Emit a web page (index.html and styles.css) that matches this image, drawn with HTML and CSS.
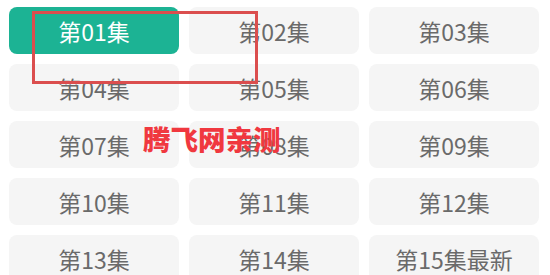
FILE: index.html
```html
<!DOCTYPE html>
<html lang="zh">
<head>
<meta charset="utf-8">
<link rel="stylesheet" href="styles.css">
</head>
<body>
<div class="page">
  <div class="grid">
    <div class="ep active">第01集</div>
    <div class="ep">第02集</div>
    <div class="ep">第03集</div>
    <div class="ep">第04集</div>
    <div class="ep">第05集</div>
    <div class="ep">第06集</div>
    <div class="ep">第07集</div>
    <div class="ep">第08集</div>
    <div class="ep">第09集</div>
    <div class="ep">第10集</div>
    <div class="ep">第11集</div>
    <div class="ep">第12集</div>
    <div class="ep">第13集</div>
    <div class="ep">第14集</div>
    <div class="ep">第15集最新</div>
  </div>
  <div class="mark-box"></div>
  <div class="watermark">腾飞网亲测</div>
</div>
</body>
</html>
```

FILE: styles.css
```css
html, body {
  margin: 0;
  padding: 0;
  background: #ffffff;
  overflow: hidden;
}
.page {
  position: relative;
  width: 550px;
  height: 275px;
  font-family: "Noto Sans CJK SC", "Noto Sans", sans-serif;
}
.grid {
  display: grid;
  grid-template-columns: repeat(3, 170px);
  grid-auto-rows: 47px;
  column-gap: 10px;
  row-gap: 10px;
  padding: 7px 0 0 9px;
}
.ep {
  background: #f5f5f5;
  border-radius: 8px;
  color: #6a6a6a;
  font-size: 23px;
  display: flex;
  align-items: center;
  justify-content: center;
  padding-top: 1px;
  box-sizing: border-box;
}
.ep.active {
  background: #1cb394;
  color: #ffffff;
}
.mark-box {
  position: absolute;
  left: 32px;
  top: 11px;
  width: 220px;
  height: 67px;
  border: 3px solid #db4e4e;
}
.watermark {
  position: absolute;
  left: 143px;
  top: 120px;
  font-size: 27.5px;
  font-weight: 900;
  color: #f0383f;
  line-height: 36px;
}
```
